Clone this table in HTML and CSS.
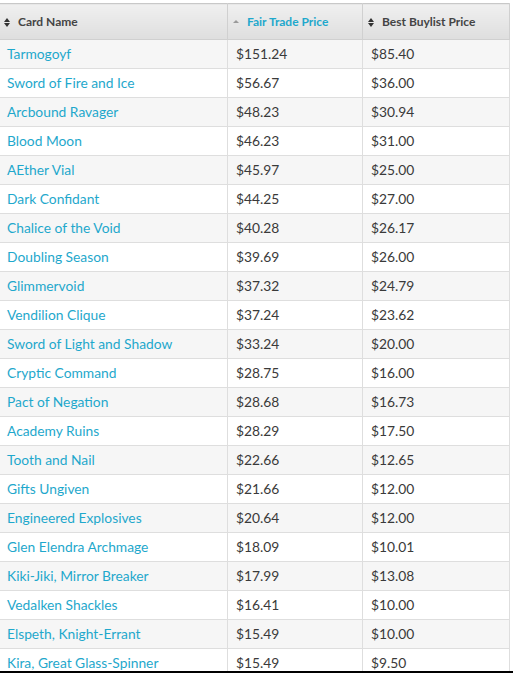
FILE: index.html
```html
<!DOCTYPE html>
<html>
<head>
<meta charset="utf-8">
<link rel="stylesheet" href="styles.css">
</head>
<body>
<div class="page">
  <div class="frame">
    <table class="prices">
      <thead>
        <tr>
          <th class="c1"><span class="sort both"></span>Card Name</th>
          <th class="c2 active"><span class="sort up"></span>Fair Trade Price</th>
          <th class="c3"><span class="sort both"></span>Best Buylist Price</th>
        </tr>
      </thead>
      <tbody>
        <tr><td><a>Tarmogoyf</a></td><td>$151.24</td><td>$85.40</td></tr>
        <tr><td><a>Sword of Fire and Ice</a></td><td>$56.67</td><td>$36.00</td></tr>
        <tr><td><a>Arcbound Ravager</a></td><td>$48.23</td><td>$30.94</td></tr>
        <tr><td><a>Blood Moon</a></td><td>$46.23</td><td>$31.00</td></tr>
        <tr><td><a>AEther Vial</a></td><td>$45.97</td><td>$25.00</td></tr>
        <tr><td><a>Dark Confidant</a></td><td>$44.25</td><td>$27.00</td></tr>
        <tr><td><a>Chalice of the Void</a></td><td>$40.28</td><td>$26.17</td></tr>
        <tr><td><a>Doubling Season</a></td><td>$39.69</td><td>$26.00</td></tr>
        <tr><td><a>Glimmervoid</a></td><td>$37.32</td><td>$24.79</td></tr>
        <tr><td><a>Vendilion Clique</a></td><td>$37.24</td><td>$23.62</td></tr>
        <tr><td><a>Sword of Light and Shadow</a></td><td>$33.24</td><td>$20.00</td></tr>
        <tr><td><a>Cryptic Command</a></td><td>$28.75</td><td>$16.00</td></tr>
        <tr><td><a>Pact of Negation</a></td><td>$28.68</td><td>$16.73</td></tr>
        <tr><td><a>Academy Ruins</a></td><td>$28.29</td><td>$17.50</td></tr>
        <tr><td><a>Tooth and Nail</a></td><td>$22.66</td><td>$12.65</td></tr>
        <tr><td><a>Gifts Ungiven</a></td><td>$21.66</td><td>$12.00</td></tr>
        <tr><td><a>Engineered Explosives</a></td><td>$20.64</td><td>$12.00</td></tr>
        <tr><td><a>Glen Elendra Archmage</a></td><td>$18.09</td><td>$10.01</td></tr>
        <tr><td><a>Kiki-Jiki, Mirror Breaker</a></td><td>$17.99</td><td>$13.08</td></tr>
        <tr><td><a>Vedalken Shackles</a></td><td>$16.41</td><td>$10.00</td></tr>
        <tr><td><a>Elspeth, Knight-Errant</a></td><td>$15.49</td><td>$10.00</td></tr>
        <tr><td><a>Kira, Great Glass-Spinner</a></td><td>$15.49</td><td>$9.50</td></tr>
      </tbody>
    </table>
  </div>
  <div class="bottombar"></div>
</div>
</body>
</html>
```
FILE: styles.css
```css
html, body {
  margin: 0;
  padding: 0;
  background: #fff;
}
.page {
  display: flex;
  flex-direction: column;
  height: 673px;
  width: 513px;
}
.frame {
  flex: 1;
  overflow: hidden;
  padding-top: 3px;
  padding-right: 2px;
  min-height: 0;
}
.bottombar {
  height: 2px;
  background: #000;
  flex: none;
}
.prices {
  width: 512px;
  border-collapse: collapse;
  table-layout: fixed;
  font-family: Lato, "Open Sans", sans-serif;
  font-size: 13.8px;
  color: #3a3a3a;
  margin-left: -2px;
  border-top: 1px solid #c8c8c8;
}
.prices th.c1 { width: 223px; }
.prices th.c2 { width: 129px; }
.prices th {
  height: 35px;
  padding: 0 0 0 5px;
  text-align: left;
  font-weight: 700;
  font-size: 12px;
  color: #444;
  background: linear-gradient(#f0f0f0, #dedede);
  border: 1px solid #d0d0d0;
  border-top: none;
  white-space: nowrap;
}
.prices th.active { color: #1fa8cc; }
.sort {
  display: inline-block;
  position: relative;
  width: 6px;
  height: 9px;
  margin-right: 8px;
  vertical-align: -1px;
}
.sort.both::before, .sort.both::after, .sort.up::before {
  content: "";
  position: absolute;
  left: 0;
  border-left: 3px solid transparent;
  border-right: 3px solid transparent;
}
.sort.both::before {
  top: 0;
  border-bottom: 4px solid #333;
}
.sort.both::after {
  top: 5px;
  border-top: 4px solid #333;
}
.sort.up::before {
  top: 2px;
  border-bottom: 3px solid #9a9a9a;
}
.prices td {
  height: 26px;
  padding: 0 0 2px 8px;
  border: 1px solid #dedede;
  border-top: none;
  white-space: nowrap;
  overflow: hidden;
}
.prices tbody tr:nth-child(odd) td { background: #f6f6f6; }
.prices tbody tr:nth-child(even) td { background: #fff; }
.prices a {
  color: #1fa8cc;
  text-decoration: none;
}
```
